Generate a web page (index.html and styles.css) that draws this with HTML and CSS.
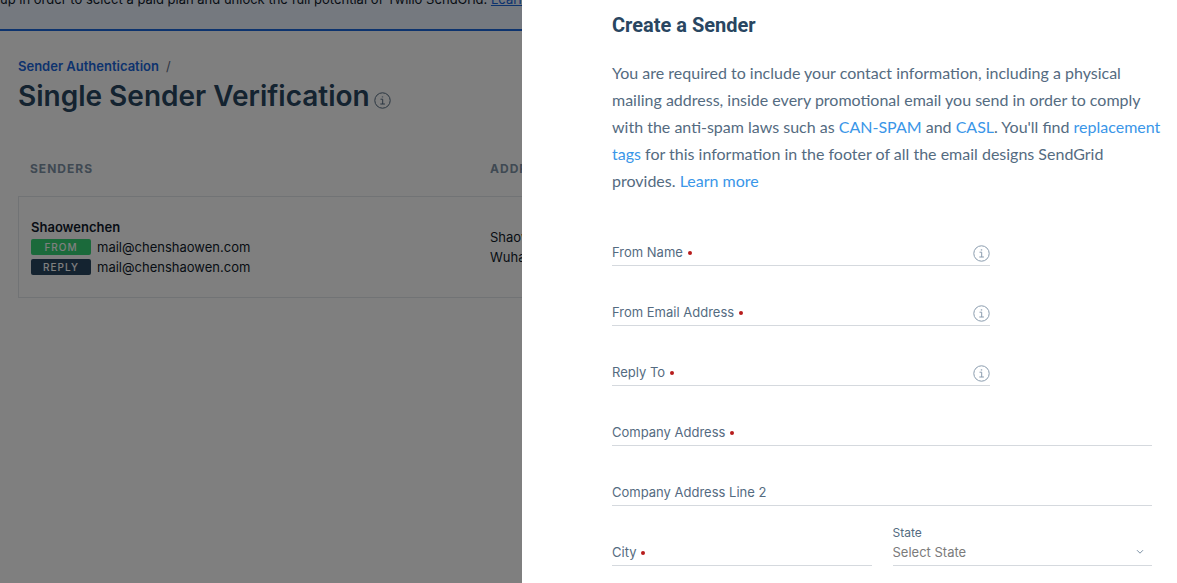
FILE: index.html
```
<!DOCTYPE html>
<html lang="en">
<head>
    <meta charset="utf-8" />
    <title>Single Sender Verification</title>
    <link rel="stylesheet" href="styles.css">
</head>
<body>
    <svg class="defs" aria-hidden="true">
        <symbol id="info" viewBox="0 0 17 17">
            <circle cx="8.5" cy="8.5" r="7.7" />
            <path d="M6.5 7.2h2.2v4.8M6.3 12h4.6" />
            <path class="dot" d="M7.8 4.3h1.4v1.2H7.8z" />
        </symbol>
    </svg>

    <div class="page">
        <div class="banner">up in order to select a paid plan and unlock the full potential of Twilio SendGrid. <a href="#">Learn more</a></div>
        <main class="content">
            <nav class="breadcrumb"><a href="#">Sender Authentication</a><span>/</span></nav>
            <div class="title">
                <h1>Single Sender Verification</h1>
                <svg class="info"><use href="#info" /></svg>
            </div>
            <table class="senders">
                <thead>
                    <tr><th class="col-sender">Senders</th><th>Address</th></tr>
                </thead>
                <tbody>
                    <tr>
                        <td>
                            <strong>Shaowenchen</strong>
                            <div class="mail"><span class="badge badge-from">From</span>mail@chenshaowen.com</div>
                            <div class="mail"><span class="badge badge-reply">Reply</span>mail@chenshaowen.com</div>
                        </td>
                        <td>Shaowenchen<br>Wuhan</td>
                    </tr>
                </tbody>
            </table>
        </main>
    </div>

    <div class="overlay"></div>

    <aside class="drawer">
        <h2>Create a Sender</h2>
        <p>You are required to include your contact information, including a physical<br>
        mailing address, inside every promotional email you send in order to comply<br>
        with the anti-spam laws such as <a href="#">CAN-SPAM</a> and <a href="#">CASL</a>. You'll find <a href="#">replacement<br>
        tags</a> for this information in the footer of all the email designs SendGrid<br>
        provides. <a href="#">Learn more</a></p>
        <form>
            <div class="field short">
                <div class="line">
                    <label class="required" for="from-name">From Name</label>
                    <input type="text" id="from-name">
                    <svg class="info"><use href="#info" /></svg>
                </div>
            </div>
            <div class="field short">
                <div class="line">
                    <label class="required" for="from-email">From Email Address</label>
                    <input type="text" id="from-email">
                    <svg class="info"><use href="#info" /></svg>
                </div>
            </div>
            <div class="field short">
                <div class="line">
                    <label class="required" for="reply-to">Reply To</label>
                    <input type="text" id="reply-to">
                    <svg class="info"><use href="#info" /></svg>
                </div>
            </div>
            <div class="field">
                <div class="line">
                    <label class="required" for="address">Company Address</label>
                    <input type="text" id="address">
                </div>
            </div>
            <div class="field">
                <div class="line">
                    <label for="address2">Company Address Line 2</label>
                    <input type="text" id="address2">
                </div>
            </div>
            <div class="row">
                <div class="field">
                    <div class="line">
                        <label class="required" for="city">City</label>
                        <input type="text" id="city">
                    </div>
                </div>
                <div class="field">
                    <label class="small" for="state">State</label>
                    <div class="line">
                        <select id="state">
                            <option>Select State</option>
                        </select>
                        <svg class="chevron" viewBox="0 0 8 6"><path d="M1 1.2l3 3 3-3" /></svg>
                    </div>
                </div>
            </div>
        </form>
    </aside>
</body>
</html>
```
FILE: styles.css
```
* {
    box-sizing: border-box;
}

body {
    margin: 0;
    height: 100vh;
    overflow: hidden;
    background: #fff;
    color: #111b2b;
    font: 13px/20px Inter, "Liberation Sans", sans-serif;
}

h1, h2, p {
    margin: 0;
}

a {
    color: #1a66dc;
}

.defs {
    position: absolute;
    width: 0;
    height: 0;
}

.info {
    flex: none;
    width: 17px;
    height: 17px;
    margin-top: 2px;
    fill: none;
    stroke: #8a9cae;
}

.dot {
    fill: #8a9cae;
    stroke: none;
}

/* page under the drawer */
.banner {
    margin-top: -11px;
    padding-bottom: 20px;
    border-bottom: 2px solid #1a66dc;
    background: #ebf2ff;
    white-space: nowrap;
}

.content {
    padding: 25px 18px;
}

.breadcrumb {
    display: flex;
    gap: 7px;
    color: #606b85;
}

.breadcrumb a {
    font-weight: 600;
    text-decoration: none;
}

.title {
    display: flex;
    align-items: center;
    gap: 4px;
    padding-bottom: 37px;
}

.title h1 {
    color: #294661;
    font-size: 28px;
    line-height: 40px;
    font-weight: 600;
}

.title .info {
    margin-top: 8px;
    stroke: #546b81;
}

.senders {
    width: 100%;
    border-collapse: separate;
    border-spacing: 0;
    table-layout: fixed;
}

.senders th {
    padding: 6px 12px 17px;
    color: #7f93a6;
    font-size: 12px;
    font-weight: 700;
    letter-spacing: 1px;
    text-align: left;
    text-transform: uppercase;
}

.senders .col-sender {
    width: 460px;
}

.senders td {
    padding: 20px 12px;
    border: 1px solid #e3e6ea;
    border-width: 1px 0;
}

.senders td:first-child {
    border-left-width: 1px;
}

.senders strong {
    font-weight: 600;
}

.mail {
    display: flex;
    align-items: center;
    gap: 6px;
}

.badge {
    width: 60px;
    border-radius: 2px;
    color: #fff;
    font-size: 10px;
    line-height: 16px;
    font-weight: 500;
    letter-spacing: 1px;
    text-align: center;
    text-transform: uppercase;
}

.badge-from {
    background: #36d576;
}

.badge-reply {
    background: #294661;
}

.overlay {
    position: fixed;
    inset: 0;
    background: rgba(0, 0, 0, .5);
}

/* drawer */
.drawer {
    position: fixed;
    top: 0;
    right: 0;
    bottom: 0;
    width: 655px;
    padding: 10px 25px 0 90px;
    overflow: hidden;
    background: #fff;
    color: #546b81;
}

.drawer h2 {
    margin-bottom: 19px;
    color: #294661;
    font: 700 20px/30px Roboto, "Liberation Sans", sans-serif;
}

.drawer p {
    margin-bottom: 12px;
    font: 16px/27px Lato, "Liberation Sans", sans-serif;
    white-space: nowrap;
}

.drawer p a {
    color: #3a96e8;
    text-decoration: none;
}

.field {
    display: flex;
    flex-direction: column;
    justify-content: flex-end;
    height: 60px;
}

.short {
    width: 70%;
}

.line {
    display: flex;
    align-items: center;
    height: 27px;
    border-bottom: 1px solid #d5d9de;
}

.required::after {
    content: "";
    display: inline-block;
    width: 4px;
    height: 4px;
    margin-left: 5px;
    border-radius: 50%;
    background: #b71c1c;
    vertical-align: middle;
}

.small {
    font-size: 12px;
    line-height: 12px;
}

input, select {
    flex: 1;
    min-width: 0;
    padding: 0;
    border: 0;
    outline: 0;
    background: none;
    color: #7b7b7b;
    font: inherit;
    appearance: none;
}

.chevron {
    width: 8px;
    height: 6px;
    margin-right: 8px;
    fill: none;
    stroke: #7d92a6;
}

.row {
    display: grid;
    grid-template-columns: 1fr 1fr;
    gap: 21px;
}
```
